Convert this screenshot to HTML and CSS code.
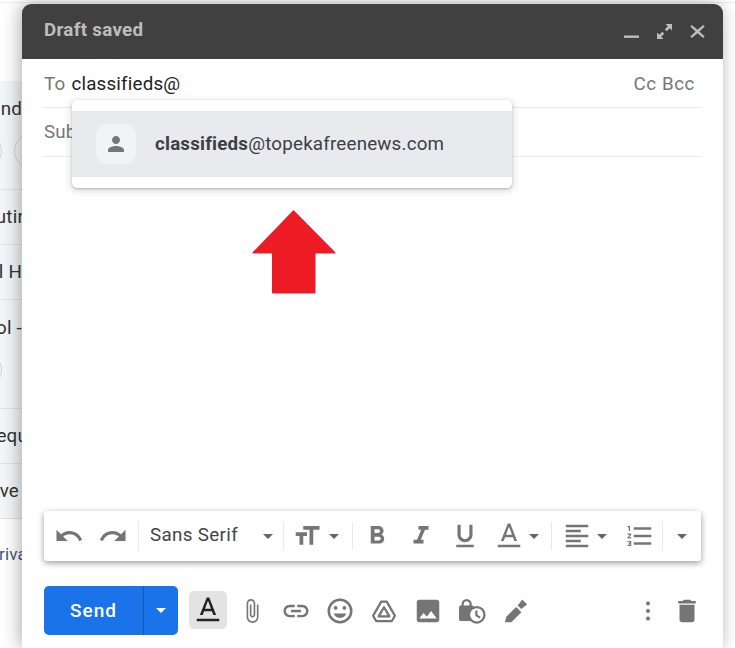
FILE: index.html
```html
<!DOCTYPE html>
<html lang="en">
<head>
<meta charset="utf-8">
<title>Draft saved</title>
<link rel="stylesheet" href="styles.css">
</head>
<body>
<div class="page">
  <aside class="inbox">
    <div class="inbox-top"></div>
    <div class="row row-tall"><span class="row-text">nd</span><div class="chips"><i class="chip"></i><i class="chip"></i></div></div>
    <div class="row"><span class="row-text row-text-over">utin</span></div>
    <div class="row"><span class="row-text">l H</span></div>
    <div class="row row-tall"><span class="row-text">ol -</span><div class="chips chips-solo"><i class="chip"></i></div></div>
    <div class="row"><span class="row-text row-text-over">equ</span></div>
    <div class="row"><span class="row-text row-text-inset">ve</span></div>
    <div class="foot"><span class="foot-text">Priva</span></div>
  </aside>

  <main class="compose">
    <header class="head">
      <span class="title">Draft saved</span>
      <div class="head-icons">
        <svg class="hi" viewBox="0 0 15 15"><rect x="0" y="11.5" width="15" height="2.4"/></svg>
        <svg class="hi" viewBox="0 0 15 15"><path d="M8.500 0H15v6.500l-2.300-2.300-3 3-1.900-1.900 3-3zM6.500 15H0V8.500l2.300 2.300 3-3 1.900 1.900-3 3z"/></svg>
        <svg class="hi" viewBox="0 0 15 15"><path d="M1.800 .9L7.500 5.700 13.200 .9l1.500 1.500L9.400 7.500l5.300 5.100-1.500 1.500L7.500 9.300l-5.700 4.800-1.500-1.500 5.300-5.100L.3 2.400z"/></svg>
      </div>
    </header>

    <div class="field field-to">
      <span class="label">To</span><span class="value">classifieds@</span>
      <span class="ccbcc">Cc Bcc</span>
    </div>
    <div class="field field-sub"><span class="label">Subject</span></div>

    <div class="suggest">
      <div class="suggest-item">
        <div class="avatar"><svg class="avatar-icon" viewBox="0 0 24 24"><path d="M12 12c2.210 0 4-1.790 4-4s-1.790-4-4-4-4 1.790-4 4 1.790 4 4 4zm0 2c-2.670 0-8 1.340-8 4v2h16v-2c0-2.660-5.330-4-8-4z"/></svg></div>
        <span class="addr"><b>classifieds</b>@topekafreenews.com</span>
      </div>
    </div>

    <svg class="arrow" viewBox="0 0 84 84"><path d="M41.500 0L83.500 42.500Q84 43.500 83 43.500H63.500V82.500Q63.500 83.500 62.500 83.500H21Q20 83.500 20 82.500V43.500H1Q0 43.500 .5 42.500z"/></svg>

    <div class="editor"></div>

    <div class="toolbar">
      <span class="tb tb-w44 tb-first"><svg class="ic" viewBox="0 0 24 24"><path d="M12.500 8c-2.650 0-5.050.99-6.900 2.600L2 7v9h9l-3.620-3.620c1.390-1.160 3.160-1.880 5.120-1.880 3.540 0 6.550 2.310 7.600 5.500l2.370-.78C21.080 11.030 17.150 8 12.500 8z"/></svg></span>
      <span class="tb tb-w44"><svg class="ic" viewBox="0 0 24 24"><path d="M18.400 10.600C16.550 8.990 14.150 8 11.500 8c-4.650 0-8.580 3.030-9.960 7.220L3.900 16c1.050-3.190 4.050-5.500 7.600-5.500 1.950 0 3.730.72 5.120 1.880L13 16h9V7l-3.600 3.600z"/></svg></span>
      <i class="sep sep-a"></i>
      <span class="font-select"><span class="font-name">Sans Serif</span><i class="caret"></i></span>
      <i class="sep"></i>
      <span class="tb tb-size"><svg class="ic" viewBox="0 0 24 24"><path d="M9 4v3h5v12h3V7h5V4H9zm-6 8h3v7h3v-7h3V9H3v3z"/></svg><i class="caret"></i></span>
      <i class="sep"></i>
      <span class="tb tb-w44 tb-b"><svg class="ic" viewBox="0 0 24 24"><path d="M15.600 10.790c.97-.67 1.650-1.770 1.650-2.790 0-2.260-1.750-4-4-4H7v14h7.040c2.090 0 3.710-1.700 3.710-3.790 0-1.520-.86-2.820-2.150-3.420zM10 6.500h3c.83 0 1.500.67 1.500 1.500s-.67 1.500-1.500 1.500h-3v-3zm3.500 9H10v-3h3.500c.83 0 1.500.67 1.500 1.500s-.67 1.500-1.500 1.500z"/></svg></span>
      <span class="tb tb-w44"><svg class="ic" viewBox="0 0 24 24"><path d="M10 4v3h2.210l-3.420 8H6v3h8v-3h-2.210l3.420-8H18V4z"/></svg></span>
      <span class="tb tb-w44"><svg class="ic" viewBox="0 0 24 24"><path d="M12 17c3.310 0 6-2.690 6-6V3h-2.500v8c0 1.930-1.570 3.500-3.500 3.500S8.500 12.930 8.500 11V3H6v8c0 3.310 2.690 6 6 6zm-7 2v2h14v-2H5z"/></svg></span>
      <span class="tb tb-w44"><svg class="ic" viewBox="0 0 24 24"><path d="M11 2L5.500 16h2.250l1.120-3h6.250l1.120 3h2.250L13 2h-2zM9.620 11L12 4.670 14.380 11H9.620zM3 19h18v2H3z"/></svg></span>
      <span class="tb tb-caret-a"><i class="caret"></i></span>
      <i class="sep"></i>
      <span class="tb tb-align"><svg class="ic" viewBox="0 0 24 24"><path d="M15 15H3v2h12v-2zm0-8H3v2h12V7zM3 13h18v-2H3v2zm0 8h18v-2H3v2zM3 3v2h18V3H3z"/></svg><i class="caret"></i></span>
      <span class="tb tb-num"><svg class="ic" viewBox="0 0 24 24"><path d="M2 17h2v.5H3v1h1v.5H2v1h3v-4H2v1zm1-9h1V4H2v1h1v3zm-1 3h1.800L2 13.100v.9h3v-1H3.200L5 10.900V10H2v1zm5-6v2h14V5H7zm0 14h14v-2H7v2zm0-6h14v-2H7v2z"/></svg></span>
      <i class="sep"></i>
      <span class="tb tb-more"><i class="caret"></i></span>
    </div>

    <footer class="actions">
      <div class="send"><span class="send-label">Send</span><span class="send-more"><i class="caret caret-white"></i></span></div>
      <span class="fmt"><svg class="ic ic-dark" viewBox="0 0 24 24"><path d="M11 2L5.500 16h2.250l1.120-3h6.250l1.120 3h2.250L13 2h-2zM9.620 11L12 4.670 14.380 11H9.620zM3 19h18v2H3z"/></svg></span>
      <span class="act"><svg class="ic ic-clip" viewBox="0 0 24 24"><path d="M16.500 6v11.500c0 2.210-1.790 4-4 4s-4-1.790-4-4V5c0-1.380 1.120-2.500 2.500-2.500s2.500 1.120 2.500 2.500v10.500c0 .55-.45 1-1 1s-1-.45-1-1V6H10v9.500c0 1.380 1.120 2.500 2.500 2.500s2.500-1.120 2.500-2.500V5c0-2.210-1.790-4-4-4S7 2.790 7 5v12.500c0 3.040 2.460 5.500 5.500 5.500s5.500-2.460 5.500-5.500V6h-1.500z"/></svg></span>
      <span class="act"><svg class="ic" viewBox="0 0 24 24"><path d="M3.900 12c0-1.710 1.390-3.100 3.100-3.100h4V7H7c-2.760 0-5 2.240-5 5s2.240 5 5 5h4v-1.900H7c-1.710 0-3.100-1.390-3.100-3.100zM8 13h8v-2H8v2zm9-6h-4v1.900h4c1.710 0 3.100 1.390 3.100 3.100s-1.390 3.100-3.100 3.100h-4V17h4c2.760 0 5-2.240 5-5s-2.240-5-5-5z"/></svg></span>
      <span class="act"><svg class="ic" viewBox="0 0 24 24"><path d="M12 2a10 10 0 1 0 0 20 10 10 0 0 0 0-20zm0 18a8 8 0 1 1 0-16 8 8 0 0 1 0 16z"/><circle cx="8.500" cy="9.500" r="1.500"/><circle cx="15.500" cy="9.500" r="1.500"/><path d="M12 17.500c2.330 0 4.300-1.460 5.110-3.500H6.890c.8 2.040 2.780 3.500 5.110 3.500z"/></svg></span>
      <span class="act"><svg class="ic" viewBox="0 0 24 24"><path class="st" d="M9.800 4.500h4.400l6.500 11.300-2.400 4.200H5.700l-2.400-4.200z"/><path class="st" d="M12 9l4.300 7.300H7.700z"/></svg></span>
      <span class="act"><svg class="ic" viewBox="0 0 24 24"><path d="M21 19V5c0-1.100-.9-2-2-2H5c-1.100 0-2 .9-2 2v14c0 1.100.9 2 2 2h14c1.100 0 2-.9 2-2zM8.500 13.500l2.500 3.010L14.500 12l4.500 6H5l3.500-4.500z"/></svg></span>
      <span class="act"><svg class="ic" viewBox="0 0 24 24"><rect x="1.600" y="7.500" width="12" height="12.500" rx="1.500"/><path class="st" d="M4.500 8V6.500a3.200 3.200 0 0 1 6.400 0V8"/><circle class="ring" cx="15.800" cy="15" r="6.200"/><path class="st" d="M15.500 11.500v4l3 1.800"/></svg></span>
      <span class="act"><svg class="ic" viewBox="0 0 24 24"><path d="M3.200 21l.9-4.300 8-8 4.200 4.200-8 8z"/><path d="M13.300 7.500l3.700-4.700 3.900 3.900-4.700 3.700z"/></svg></span>
      <span class="act act-right"><svg class="ic" viewBox="0 0 24 24"><circle cx="12" cy="6" r="1.600"/><circle cx="12" cy="12" r="1.600"/><circle cx="12" cy="18" r="1.600"/></svg></span>
      <span class="act act-del"><svg class="ic" viewBox="0 0 24 24"><path d="M6 19c0 1.100.9 2 2 2h8c1.100 0 2-.9 2-2V7H6v12zM19 4h-3.500l-1-1h-5l-1 1H5v2h14V4z"/></svg></span>
    </footer>
  </main>
</div>
</body>
</html>
```
FILE: styles.css
```css
* { box-sizing: border-box; }
html, body { margin: 0; padding: 0; }
body { background: #fff; font-family: Roboto, "Liberation Sans", sans-serif; overflow: hidden; }
.page { display: flex; width: 735px; height: 648px; overflow: hidden; background: linear-gradient(#fff 2px, #ececec 2px, #ececec 3px, #fff 3px); }

.inbox { width: 22px; flex: none; display: flex; flex-direction: column; height: 648px; overflow: hidden; color: #333; font-size: 18.75px; letter-spacing: .2px; }
.inbox-top { height: 81px; flex: none; }
.row { height: 55px; background: #f2f6f8; border-bottom: 1px solid #dfe3e6; display: flex; flex-direction: column; align-items: flex-end; padding-top: 17px; white-space: nowrap; flex: none; }
.row-tall { height: 109px; padding-top: 18px; }
.row-text { line-height: 21px; flex: none; }
.row-text-inset { margin-right: 3px; }
.row-text-over { margin-right: -6px; }
.chips { display: flex; gap: 12px; margin-top: 13px; flex: none; margin-right: -28px; }
.chips-solo { margin-right: 20px; }
.chip { width: 36px; height: 36px; border: 1px solid #cfd3d6; border-radius: 50%; display: block; flex: none; }
.foot { flex: 1; display: flex; flex-direction: column; align-items: flex-end; padding-top: 25px; white-space: nowrap; background: #fff; }
.foot-text { font-size: 17px; color: #3c5a78; line-height: 20px; flex: none; margin-right: -5px; }

.compose { position: relative; width: 701px; height: 644px; margin-top: 4px; flex: none; background: #fff; border-radius: 9px 9px 0 0; box-shadow: -2px 0 18px rgba(0,0,0,.32); display: flex; flex-direction: column; }
.head { height: 55px; flex: none; background: #404040; border-radius: 9px 9px 0 0; display: flex; align-items: center; justify-content: space-between; padding: 0 18px 3px 22px; }
.title { color: #bdbdbd; font-size: 18.75px; font-weight: 700; letter-spacing: .3px; }
.head-icons { display: flex; gap: 18px; margin-top: 3px; }
.hi { width: 15px; height: 15px; fill: #bdbdbd; display: block; }

.field { height: 49px; flex: none; margin: 0 22px; border-bottom: 1px solid #e8eaed; display: flex; align-items: center; font-size: 18.75px; letter-spacing: .2px; }
.field-to { padding-top: 1px; }
.field-sub { padding-bottom: 1px; }
.label { color: #777; }
.value { color: #222; margin-left: 6px; }
.ccbcc { margin-left: auto; margin-right: 6px; color: #777; letter-spacing: .6px; }

.suggest { position: absolute; left: 50px; top: 96px; width: 440px; height: 88px; padding: 11px 0; background: #fff; border-radius: 5px; box-shadow: 0 1px 2px rgba(60,64,67,.3), 0 2px 6px 2px rgba(60,64,67,.15); }
.suggest-item { height: 66px; background: #e8eaed; display: flex; align-items: center; padding-left: 24px; }
.avatar { width: 40px; height: 40px; border-radius: 11px; background: #f1f3f4; display: flex; align-items: center; justify-content: center; margin-right: 19px; }
.avatar-icon { width: 24px; height: 24px; fill: #757575; }
.addr { font-size: 18.75px; color: #3c4043; letter-spacing: .2px; }
.addr b { font-weight: 700; }

.arrow { position: absolute; left: 230px; top: 206px; width: 84px; height: 84px; fill: #ed1c24; }

.editor { flex: 1; }

.toolbar { height: 50px; flex: none; margin: 0 22px; background: #fff; border-radius: 3px; box-shadow: 0 2px 6px rgba(0,0,0,.4); display: flex; align-items: center; }
.tb { height: 100%; display: flex; align-items: center; justify-content: center; flex: none; }
.tb-w44 { width: 44px; }
.tb-first { margin-left: 3px; }
.ic { width: 30px; height: 30px; fill: #757575; display: block; flex: none; }
.ic-dark { fill: #222; }
.ic-clip { width: 26px; height: 26px; }
.st { fill: none; stroke: #757575; stroke-width: 1.8; stroke-linejoin: round; }
.ring { fill: #fff; stroke: #757575; stroke-width: 1.8; }
.sep { width: 1px; height: 28px; background: #e8eaed; flex: none; display: block; }
.sep-a { margin-left: 3px; }
.font-select { width: 144px; flex: none; display: flex; align-items: center; justify-content: space-between; padding: 0 10px 0 11px; font-size: 18.75px; letter-spacing: .36px; color: #444; }
.font-name { margin-top: -3px; }
.caret { display: block; flex: none; width: 0; height: 0; border-left: 5.5px solid transparent; border-right: 5.5px solid transparent; border-top: 5.5px solid #666; }
.caret-white { border-top-color: #fff; }
.tb-size { width: 68px; justify-content: flex-start; padding-left: 8px; gap: 7px; }
.tb-b { margin-left: 2px; }
.tb-caret-a { width: 20px; justify-content: flex-start; }
.tb-caret-a .caret { margin-left: -2px; }
.tb-align { width: 67px; justify-content: flex-start; padding-left: 10px; gap: 5px; }
.tb-num { width: 43px; padding-right: 2px; }
.tb-more { flex: 1; }

.actions { height: 87px; flex: none; padding: 25px 19px 0 22px; display: flex; align-items: flex-start; }
.send { width: 134px; height: 49px; background: #1a73e8; border-radius: 5px; display: flex; flex: none; color: #fff; }
.send-label { width: 100px; display: flex; align-items: center; justify-content: center; font-size: 19px; font-weight: 500; letter-spacing: 1px; border-right: 1px solid #1559b7; }
.send-more { flex: 1; display: flex; align-items: center; justify-content: center; }
.fmt { width: 38px; height: 38px; margin: 5px 3px 0 11px; background: #e3e3e3; border-radius: 5px; display: flex; align-items: center; justify-content: center; flex: none; }
.act { width: 44px; height: 49px; display: flex; align-items: center; justify-content: center; flex: none; }
.act-right { margin-left: auto; }
.act-del { width: 34px; }
```
